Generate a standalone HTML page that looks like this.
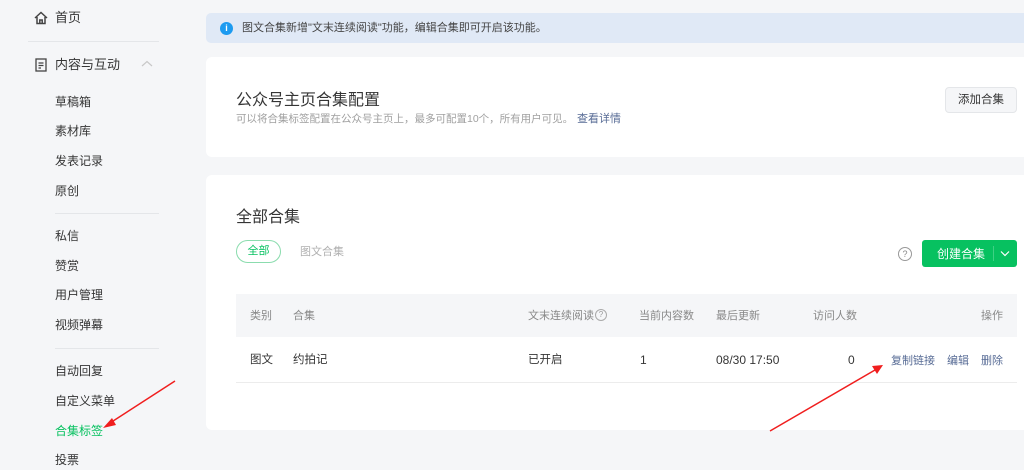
<!DOCTYPE html>
<html><head><meta charset="utf-8"><style>
*{margin:0;padding:0;box-sizing:border-box}
body{width:1024px;height:470px;overflow:hidden;background:#f5f6f8;font-family:"Liberation Sans","Noto Sans CJK SC",sans-serif;color:#353535;position:relative}
.a{position:absolute;white-space:nowrap;line-height:16px}
.s{font-size:12px;color:#353535;left:55px}
.hr{position:absolute;height:1px;background:#e4e6e9}
.card{position:absolute;left:206px;width:830px;background:#fff;border-radius:6px}
.th{font-size:11px;color:#888}
.td{font-size:11.5px;color:#353535}
.lk{font-size:11px;color:#576b95}
</style></head><body>
<svg class="a" style="left:33px;top:10px" width="16" height="16" viewBox="0 0 16 16"><path d="M2 8 L8 2.5 L14 8 M4 7 V13.5 H12 V7 M6.8 13.5 V10 H9.2 V13.5" fill="none" stroke="#444" stroke-width="1.5"/></svg>
<div class="a" style="left:55px;top:10px;font-size:13px">首页</div>
<div class="hr" style="left:28px;top:41px;width:131px"></div>
<svg class="a" style="left:35px;top:58px" width="12" height="14" viewBox="0 0 12 14"><rect x="1" y="1" width="10" height="12" fill="none" stroke="#444" stroke-width="1.3"/><path d="M3.5 5H8.5M3.5 7.5H8.5M3.5 10H6" stroke="#444" stroke-width="1.2"/></svg>
<div class="a" style="left:55px;top:57px;font-size:13px">内容与互动</div>
<svg class="a" style="left:141px;top:60px" width="12" height="8" viewBox="0 0 12 8"><path d="M1 6 L6 1.5 L11 6" fill="none" stroke="#c8c8c8" stroke-width="1.2"/></svg>
<div class="a s" style="top:94px">草稿箱</div>
<div class="a s" style="top:123px">素材库</div>
<div class="a s" style="top:153px">发表记录</div>
<div class="a s" style="top:183px">原创</div>
<div class="hr" style="left:55px;top:213px;width:104px"></div>
<div class="a s" style="top:228px">私信</div>
<div class="a s" style="top:258px">赞赏</div>
<div class="a s" style="top:287px">用户管理</div>
<div class="a s" style="top:317px">视频弹幕</div>
<div class="hr" style="left:55px;top:348px;width:104px"></div>
<div class="a s" style="top:363px">自动回复</div>
<div class="a s" style="top:393px">自定义菜单</div>
<div class="a s" style="top:423px;color:#07c160">合集标签</div>
<div class="a s" style="top:452px">投票</div>

<div class="a" style="left:206px;top:13px;width:830px;height:30px;background:#e0e9f6;border-radius:5px"></div>
<div class="a" style="left:220px;top:22px;width:13px;height:13px;border-radius:50%;background:#1d9bf0;color:#fff;font-size:9px;font-weight:bold;text-align:center;line-height:13px">i</div>
<div class="a" style="left:242px;top:20px;font-size:11px;color:#444">图文合集新增"文末连续阅读"功能，编辑合集即可开启该功能。</div>

<div class="card" style="top:57px;height:100px"></div>
<div class="a" style="left:236px;top:91px;font-size:16px;line-height:20px;color:#353535">公众号主页合集配置</div>
<div class="a" style="left:236px;top:111px;font-size:10.5px;color:#a0a0a0">可以将合集标签配置在公众号主页上，最多可配置10个，所有用户可见。</div>
<div class="a lk" style="left:577px;top:111px">查看详情</div>
<div class="a" style="left:945px;top:87px;width:72px;height:26px;background:#f5f6f8;border:1px solid #e4e6e9;border-radius:4px;font-size:11.5px;text-align:center;line-height:24px;color:#353535">添加合集</div>

<div class="card" style="top:175px;height:255px"></div>
<div class="a" style="left:236px;top:208px;font-size:16px;line-height:20px">全部合集</div>
<div class="a" style="left:236px;top:240px;width:45px;height:23px;border:1px solid #8bdcae;border-radius:12px;font-size:11px;color:#07c160;text-align:center;line-height:21px">全部</div>
<div class="a" style="left:300px;top:244px;font-size:11px;color:#b0b0b0">图文合集</div>
<div class="a" style="left:898px;top:247px;width:14px;height:14px;border:1px solid #999;border-radius:50%;font-size:9px;color:#888;text-align:center;line-height:12px">?</div>
<div class="a" style="left:922px;top:240px;width:95px;height:27px;background:#07c160;border-radius:3px"></div>
<div class="a" style="left:937px;top:246px;font-size:12px;color:#fff">创建合集</div>
<div class="a" style="left:993px;top:246px;width:1px;height:15px;background:#3fd184"></div>
<svg class="a" style="left:1000px;top:250px" width="10" height="7" viewBox="0 0 10 7"><path d="M1 1.5 L5 5.5 L9 1.5" fill="none" stroke="#fff" stroke-width="1.2"/></svg>

<div class="a" style="left:236px;top:294px;width:781px;height:43px;background:#f5f6f8"></div>
<div class="a th" style="left:250px;top:308px">类别</div>
<div class="a th" style="left:293px;top:308px">合集</div>
<div class="a th" style="left:528px;top:308px">文末连续阅读</div>
<div class="a" style="left:595px;top:309px;width:12px;height:12px;border:1px solid #aaa;border-radius:50%;font-size:8px;color:#999;text-align:center;line-height:10px">?</div>
<div class="a th" style="left:639px;top:308px">当前内容数</div>
<div class="a th" style="left:716px;top:308px">最后更新</div>
<div class="a th" style="left:813px;top:308px">访问人数</div>
<div class="a th" style="left:981px;top:308px">操作</div>
<div class="a td" style="left:250px;top:352px">图文</div>
<div class="a td" style="left:293px;top:352px">约拍记</div>
<div class="a td" style="left:528px;top:352px">已开启</div>
<div class="a td" style="left:640px;top:352px;font-size:12px">1</div>
<div class="a td" style="left:716px;top:352px;font-size:12px">08/30 17:50</div>
<div class="a td" style="left:848px;top:352px;font-size:12px">0</div>
<div class="a lk" style="left:891px;top:353px">复制链接</div>
<div class="a lk" style="left:947px;top:353px">编辑</div>
<div class="a lk" style="left:981px;top:353px">删除</div>
<div class="hr" style="left:236px;top:382px;width:781px;background:#ececec"></div>

<svg class="a" style="left:0;top:0" width="1024" height="470">
<line x1="175" y1="381" x2="110" y2="423" stroke="#f01e1e" stroke-width="1.5"/>
<polygon points="103,428 112,418 116,425" fill="#f01e1e"/>
<line x1="770" y1="431" x2="875" y2="370" stroke="#f01e1e" stroke-width="1.5"/>
<polygon points="883,365 872,366 877,374" fill="#f01e1e"/>
</svg>
</body></html>
